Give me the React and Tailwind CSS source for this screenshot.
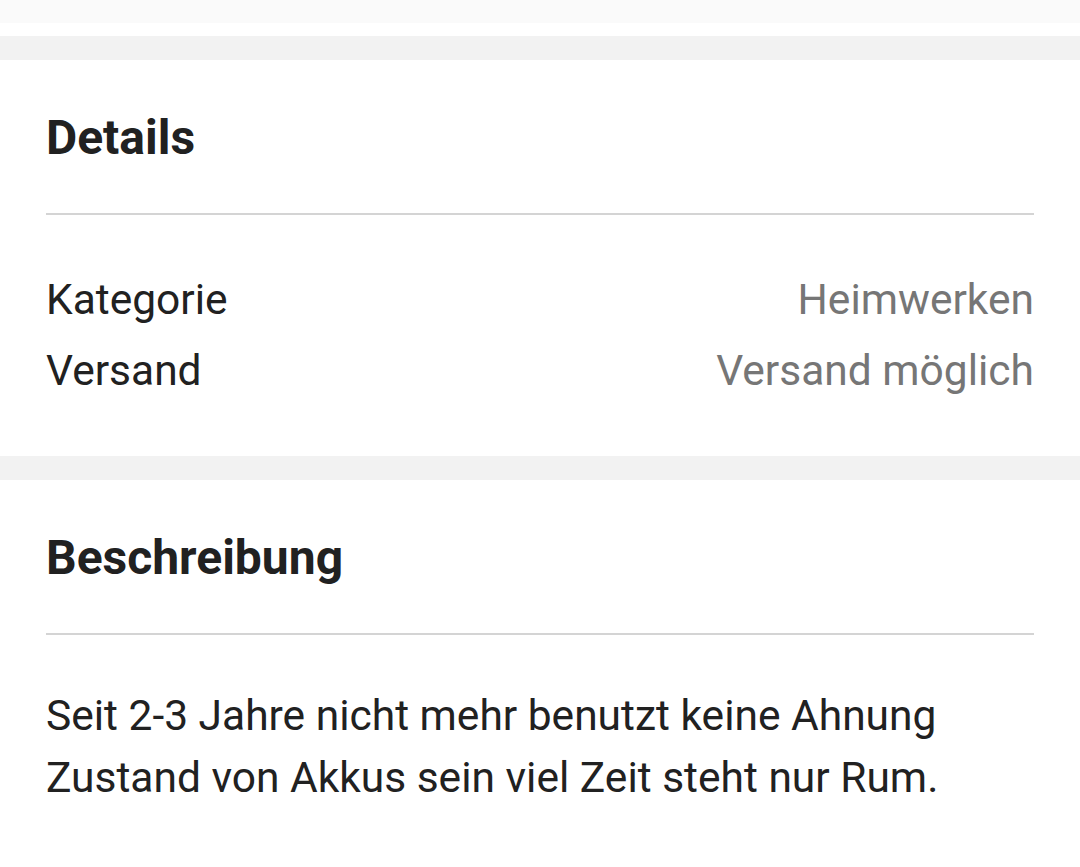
export default function App() {
  return (
    <div className="w-[1080px] h-[867px] bg-white overflow-hidden" style={{ fontFamily: "Roboto, 'Noto Sans', sans-serif" }}>
      <div className="h-[23px] bg-[#fafafa]" />
      <div className="h-[13px] bg-white" />
      <div className="h-[24px] bg-[#f2f2f2]" />
      <section className="bg-white px-[46px] pt-[48px] pb-[50px]">
        <h2 className="text-[48px] leading-[60px] font-bold text-[#212121]">Details</h2>
        <div className="mt-[45px] h-[2px] bg-[#d4d4d4]" />
        <div className="mt-[49px] text-[42.5px] leading-[71px]">
          <div className="flex justify-between">
            <span className="text-[#212121]">Kategorie</span>
            <span className="text-[#767676]">Heimwerken</span>
          </div>
          <div className="flex justify-between">
            <span className="text-[#212121]">Versand</span>
            <span className="text-[#767676]">Versand möglich</span>
          </div>
        </div>
      </section>
      <div className="h-[24px] bg-[#f2f2f2]" />
      <section className="bg-white px-[46px] pt-[48px]">
        <h2 className="text-[48px] leading-[60px] font-bold text-[#212121]">Beschreibung</h2>
        <div className="mt-[45px] h-[2px] bg-[#d4d4d4]" />
        <p className="mt-[50px] text-[42.5px] leading-[62px] text-[#212121]">
          Seit 2-3 Jahre nicht mehr benutzt keine Ahnung Zustand von Akkus sein viel Zeit steht nur Rum.
        </p>
      </section>
    </div>
  );
}
